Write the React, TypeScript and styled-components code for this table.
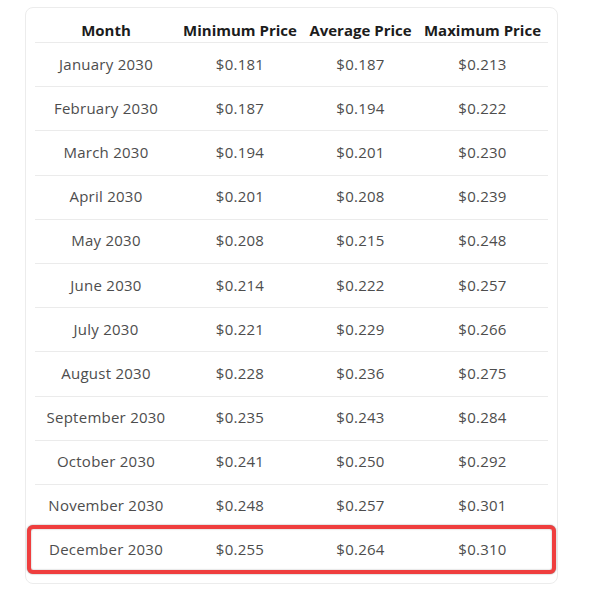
import React from "react";
import styled, { createGlobalStyle } from "styled-components";

const Global = createGlobalStyle`
  html, body { margin: 0; padding: 0; background: #ffffff; }
  body { font-family: "Open Sans", "Liberation Sans", sans-serif; }
`;

const Card = styled.div`
  box-sizing: border-box;
  margin: 7px 0 0 25px;
  width: 533px;
  height: 577px;
  border: 1px solid #ececec;
  border-radius: 8px;
  padding: 0 9px;
`;

const cols = "142px 126px 115px 129px";

const HeaderRow = styled.div`
  display: grid;
  grid-template-columns: ${cols};
  height: 35px;
  align-items: center;
  border-bottom: 1px solid #ebebeb;
  box-sizing: border-box;
`;

const HeadCell = styled.div`
  text-align: center;
  font-weight: 700;
  font-size: 15px;
  color: #1c1c1c;
  white-space: nowrap;
  padding-top: 9px;
`;

const Row = styled.div<{ $highlight?: boolean }>`
  display: grid;
  grid-template-columns: ${cols};
  align-items: center;
  box-sizing: border-box;
  height: 44.2px;
  border-bottom: 1px solid #ebebeb;
  ${(p) =>
    p.$highlight &&
    `
    height: 49px;
    margin: -4px -8px 0;
    padding: 0 4px;
    border: 4px solid #ef3e3e;
    border-radius: 6px;
    box-shadow: 0 0 1.5px rgba(0,0,0,0.55), inset 0 0 1.5px rgba(0,0,0,0.45);
    position: relative;
    background: #fff;
  `}
`;

const Cell = styled.div`
  text-align: center;
  font-size: 15px;
  letter-spacing: 0.25px;
  color: #4d4d4d;
  white-space: nowrap;
  padding-bottom: 2px;
`;

const data: [string, string, string, string][] = [
  ["January 2030", "$0.181", "$0.187", "$0.213"],
  ["February 2030", "$0.187", "$0.194", "$0.222"],
  ["March 2030", "$0.194", "$0.201", "$0.230"],
  ["April 2030", "$0.201", "$0.208", "$0.239"],
  ["May 2030", "$0.208", "$0.215", "$0.248"],
  ["June 2030", "$0.214", "$0.222", "$0.257"],
  ["July 2030", "$0.221", "$0.229", "$0.266"],
  ["August 2030", "$0.228", "$0.236", "$0.275"],
  ["September 2030", "$0.235", "$0.243", "$0.284"],
  ["October 2030", "$0.241", "$0.250", "$0.292"],
  ["November 2030", "$0.248", "$0.257", "$0.301"],
  ["December 2030", "$0.255", "$0.264", "$0.310"],
];

export default function App() {
  return (
    <>
      <Global />
      <Card>
        <HeaderRow>
          <HeadCell>Month</HeadCell>
          <HeadCell>Minimum Price</HeadCell>
          <HeadCell>Average Price</HeadCell>
          <HeadCell>Maximum Price</HeadCell>
        </HeaderRow>
        {data.map((r, i) => (
          <Row key={r[0]} $highlight={i === data.length - 1}>
            {r.map((c, j) => (
              <Cell key={j}>{c}</Cell>
            ))}
          </Row>
        ))}
      </Card>
    </>
  );
}
